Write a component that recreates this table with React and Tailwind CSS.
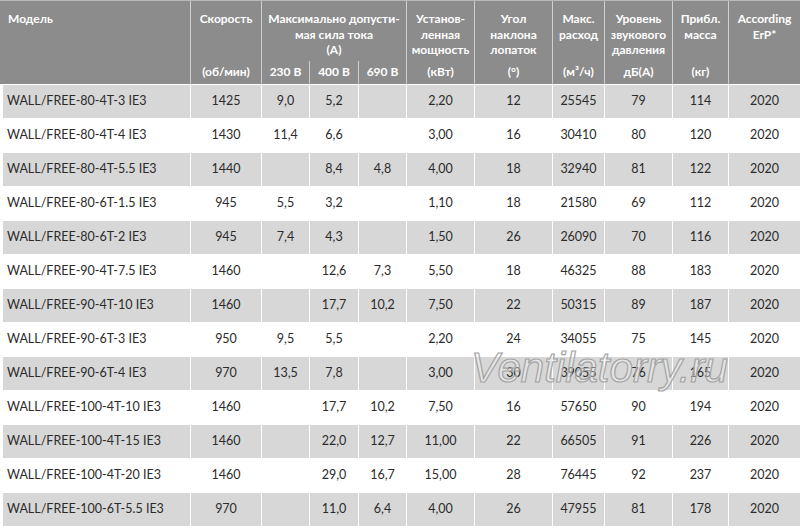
const cols =
  "grid grid-cols-[190px_70px_47px_48px_47px_67px_77px_51px_67px_55px_71px] gap-x-px";

const rows = [
  ["WALL/FREE-80-4T-3 IE3", "1425", "9,0", "5,2", "", "2,20", "12", "25545", "79", "114", "2020"],
  ["WALL/FREE-80-4T-4 IE3", "1430", "11,4", "6,6", "", "3,00", "16", "30410", "80", "120", "2020"],
  ["WALL/FREE-80-4T-5.5 IE3", "1440", "", "8,4", "4,8", "4,00", "18", "32940", "81", "122", "2020"],
  ["WALL/FREE-80-6T-1.5 IE3", "945", "5,5", "3,2", "", "1,10", "18", "21580", "69", "112", "2020"],
  ["WALL/FREE-80-6T-2 IE3", "945", "7,4", "4,3", "", "1,50", "26", "26090", "70", "116", "2020"],
  ["WALL/FREE-90-4T-7.5 IE3", "1460", "", "12,6", "7,3", "5,50", "18", "46325", "88", "183", "2020"],
  ["WALL/FREE-90-4T-10 IE3", "1460", "", "17,7", "10,2", "7,50", "22", "50315", "89", "187", "2020"],
  ["WALL/FREE-90-6T-3 IE3", "950", "9,5", "5,5", "", "2,20", "24", "34055", "75", "145", "2020"],
  ["WALL/FREE-90-6T-4 IE3", "970", "13,5", "7,8", "", "3,00", "30", "39055", "76", "165", "2020"],
  ["WALL/FREE-100-4T-10 IE3", "1460", "", "17,7", "10,2", "7,50", "16", "57650", "90", "194", "2020"],
  ["WALL/FREE-100-4T-15 IE3", "1460", "", "22,0", "12,7", "11,00", "22", "66505", "91", "226", "2020"],
  ["WALL/FREE-100-4T-20 IE3", "1460", "", "29,0", "16,7", "15,00", "28", "76445", "92", "237", "2020"],
  ["WALL/FREE-100-6T-5.5 IE3", "970", "", "11,0", "6,4", "4,00", "26", "47955", "81", "178", "2020"],
];

// header column: title lines on top, unit at the bottom
const HeadCol = ({ title, unit }) => (
  <div className="row-span-2 bg-[#8c8c8c] flex flex-col items-center text-center pt-[10px] pb-[5px]">
    <div className="leading-[15.5px]">
      {title.map((t) => (
        <div key={t}>{t}</div>
      ))}
    </div>
    <div className="mt-auto leading-[15px]">{unit}</div>
  </div>
);

const Row = ({ cells, shaded }) => (
  <div className={`${cols} h-[34px] pb-px`}>
    {cells.map((c, i) => (
      <div
        key={i}
        className={`flex items-center ${i === 0 ? "pl-[3px]" : "justify-center"}`}
      >
        <div
          className={`h-full w-full flex items-center ${
            i === 0 ? "pl-[4px]" : "justify-center"
          } ${shaded ? "bg-[#d7d7d7]" : ""}`}
        >
          {c}
        </div>
      </div>
    ))}
  </div>
);

export default function App() {
  return (
    <div
      className="relative w-[800px] h-[527px] bg-white overflow-hidden text-[12.5px] text-[#2b2b2b]"
      style={{ fontFamily: "Lato, 'Open Sans', sans-serif" }}
    >
      <div className="border-t border-[#b9b9b9] bg-[#cfcfcf] mb-px">
        <div className={`${cols} grid-rows-[60px_23px] text-white font-bold text-[12px]`}>
          <div className="row-span-2 bg-[#8c8c8c] pl-[8px] pt-[10px] leading-[15.5px]">Модель</div>
          <HeadCol title={["Скорость"]} unit="(об/мин)" />
          <div className="col-span-3 bg-[#8c8c8c] flex flex-col items-center text-center pt-[10px] leading-[15.5px]">
            <div>Максимально допусти-</div>
            <div>мая сила тока</div>
            <div>(A)</div>
          </div>
          <HeadCol title={["Установ-", "ленная", "мощность"]} unit="(кВт)" />
          <HeadCol title={["Угол", "наклона", "лопаток"]} unit="(°)" />
          <HeadCol title={["Макс.", "расход"]} unit="(м³/ч)" />
          <HeadCol title={["Уровень", "звукового", "давления"]} unit="дБ(A)" />
          <HeadCol title={["Прибл.", "масса"]} unit="(кг)" />
          <HeadCol title={["According", "ErP*"]} unit="" />
          <div className="bg-[#8c8c8c] flex items-start justify-center pt-[2px]">230 В</div>
          <div className="bg-[#8c8c8c] flex items-start justify-center pt-[2px]">400 В</div>
          <div className="bg-[#8c8c8c] flex items-start justify-center pt-[2px]">690 В</div>
        </div>
      </div>

      {rows.map((r, i) => (
        <Row key={r[0]} cells={r} shaded={i % 2 === 0} />
      ))}

      {/* watermark over the table */}
      <div
        className="absolute left-[471px] top-[347px] italic text-[42px] leading-none text-white/35 [-webkit-text-stroke:1.2px_#a4a4a4] pointer-events-none"
        style={{ fontFamily: "'Liberation Sans', Arial, sans-serif" }}
      >
        Ventilatorry.ru
      </div>
    </div>
  );
}
